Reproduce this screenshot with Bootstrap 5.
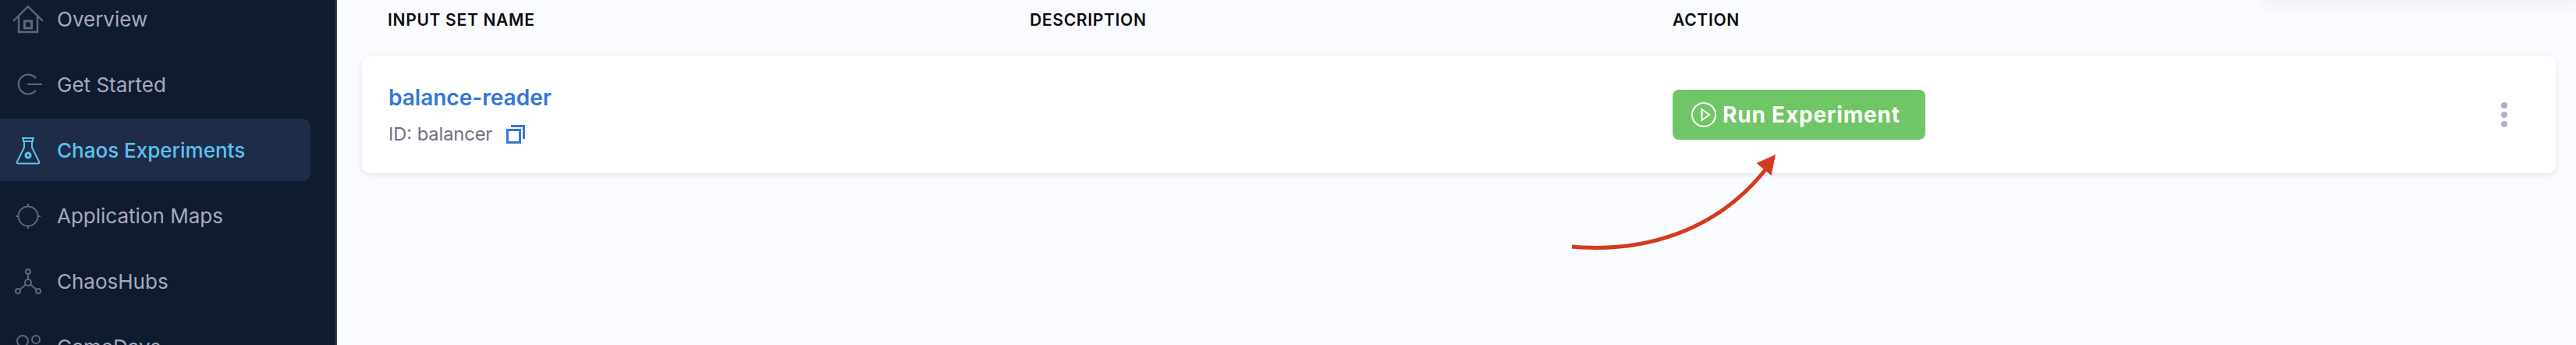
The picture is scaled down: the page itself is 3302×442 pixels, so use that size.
<!DOCTYPE html>
<html lang="en">
<head>
  <meta charset="UTF-8">
  <title>Chaos Experiments - Input Sets</title>
  <link href="https://cdn.jsdelivr.net/npm/bootstrap@5.3.3/dist/css/bootstrap.min.css" rel="stylesheet">
  <style>
    html, body { height: 442px; overflow: hidden; }
    body { font-family: Inter, "Liberation Sans", sans-serif; background: #fafbff; }
    .app-shell { height: 442px; overflow: hidden; position: relative; }

    /* sidebar */
    .side-nav { width: 432px; flex: none; background: #0f1b2e; border-right: 2px solid #3a4150; }
    .side-list { margin-top: -16px; padding-right: 32px; }
    .side-item { height: 80px; margin-bottom: 4px; font-size: 26px; color: #a9a9c2; border-radius: 0 10px 10px 0; }
    .side-item.is-active { background: #1e2c47; color: #5dc1f2; font-weight: 500; }
    .side-icon { width: 73px; flex: none; display: flex; justify-content: center; padding-right: 1px; }
    .side-icon svg { width: 40px; height: 40px; fill: none; stroke: #62667a; stroke-width: 2; }
    .is-active .side-icon svg { stroke: #5dc1f2; }

    /* table */
    .main-area { padding: 0 26px 0 32px; min-width: 0; }
    .set-head, .set-row { display: grid; grid-template-columns: 823px 824px 1fr 80px; }
    .set-head { height: 72px; padding: 12px 33px 0; font-size: 21px; letter-spacing: .7px; font-weight: 600; color: #0b0b0d; line-height: 28px; }
    .set-card { height: 150px; padding: 0 33px; border: 0; border-radius: 10px; background: #fff; box-shadow: 0 2px 6px rgba(40, 41, 61, .1); align-items: center; }
    .set-name { font-size: 28px; font-weight: 600; color: #3478d4; line-height: 34px; text-decoration: none; padding-left: 1px; display: block; }
    .set-id { font-size: 23.500px; color: #6b6d85; line-height: 30px; margin-top: 15px; padding-left: 1px; }
    .copy-icon { width: 24px; height: 24px; margin-left: 11px; fill: none; stroke: #3478d4; stroke-width: 3; vertical-align: -4px; }
    .run-btn { height: 64px; width: 324px; padding: 0 0 0 24px; border: 0; border-radius: 8px; background: #70c666; color: #fff; font-size: 28px; font-weight: 700; letter-spacing: .8px; }
    .run-btn svg { width: 32px; height: 32px; fill: none; stroke: #fff; stroke-width: 2; flex: none; }
    .more-dots { gap: 4px; padding-right: 29px; }
    .more-dots i { display: block; width: 8px; height: 8px; border-radius: 50%; background: #b0b0c8; }

    /* overlays */
    .top-shade { position: absolute; top: -40px; right: 0; width: 400px; height: 40px; box-shadow: 0 2px 22px rgba(40, 41, 61, .09); }
    .call-arrow { position: absolute; left: 2000px; top: 190px; width: 290px; height: 140px; }
  </style>
</head>
<body>
<div class="app-shell d-flex">

  <!-- Sidebar -->
  <nav class="side-nav">
    <div class="side-list">
      <div class="side-item d-flex align-items-center">
        <span class="side-icon"><svg viewBox="0 0 40 40"><path d="M1 23 20 4.500 39 23M8 17v20h24V17" stroke-width="2.400"/><rect x="15.500" y="23" width="9" height="9" stroke-width="3"/></svg></span>
        <span>Overview</span>
      </div>
      <div class="side-item d-flex align-items-center">
        <span class="side-icon"><svg viewBox="0 0 40 40"><path d="M30 12.200A12.500 12.500 0 1 0 30 27.800M19 20h19" stroke-width="2.200"/></svg></span>
        <span>Get Started</span>
      </div>
      <div class="side-item is-active d-flex align-items-center">
        <span class="side-icon"><svg viewBox="0 0 40 40"><path d="M12 5h16M14 5v4h12V5M15 9v8L6 35a1.500 1.500 0 0 0 1 2.500h26a1.500 1.500 0 0 0 1-2.500L25 17V9"/><circle cx="20" cy="27" r="3" stroke-width="3"/></svg></span>
        <span>Chaos Experiments</span>
      </div>
      <div class="side-item d-flex align-items-center">
        <span class="side-icon"><svg viewBox="0 0 40 40"><circle cx="20" cy="21" r="12.500"/><path d="M20 5v3.500M20 33.500V37M4 21h3.500M32.500 21H36"/></svg></span>
        <span>Application Maps</span>
      </div>
      <div class="side-item d-flex align-items-center">
        <span class="side-icon"><svg viewBox="0 0 40 40"><circle cx="20" cy="8" r="3"/><circle cx="20" cy="22" r="4"/><circle cx="7" cy="33" r="3"/><circle cx="33" cy="33" r="3"/><path d="M20 11v7M17 24.500 9.500 31M23 24.500 30.500 31"/></svg></span>
        <span>ChaosHubs</span>
      </div>
      <div class="side-item d-flex align-items-center">
        <span class="side-icon"><svg viewBox="0 0 40 40"><circle cx="13" cy="13" r="7"/><circle cx="30" cy="11" r="5"/><path d="M2 36c0-9 5-14 11-14s11 5 11 14M27 19c6 0 10 4 10 11"/></svg></span>
        <span>GameDays</span>
      </div>
    </div>
  </nav>

  <!-- Main -->
  <main class="main-area flex-grow-1">
    <div class="set-head">
      <div>INPUT SET NAME</div>
      <div>DESCRIPTION</div>
      <div>ACTION</div>
      <div></div>
    </div>
    <div class="card set-card set-row">
      <div>
        <a class="set-name" href="#">balance-reader</a>
        <div class="set-id">ID: balancer
          <svg class="copy-icon" viewBox="0 0 24 24"><rect x="1.500" y="6.500" width="16" height="16"/><path d="M6 1.500h16.500V18"/></svg>
        </div>
      </div>
      <div></div>
      <div>
        <button class="run-btn btn d-flex align-items-center" type="button">
          <svg viewBox="0 0 32 32"><circle cx="16" cy="16" r="15"/><path d="M13.500 9 23 16l-9.500 7z"/></svg>
          <span class="ms-2">Run Experiment</span>
        </button>
      </div>
      <div class="more-dots d-flex flex-column align-items-end">
        <i></i><i></i><i></i>
      </div>
    </div>
  </main>

  <!-- Overlays -->
  <div class="top-shade"></div>
  <svg class="call-arrow" viewBox="0 0 290 140">
    <path d="M15 126C105 134 200 108 265 25" fill="none" stroke="#d43a1f" stroke-width="5"/>
    <path d="M276 8 251.500 19 270.500 35z" fill="#d43a1f"/>
  </svg>
</div>
<script src="https://cdn.jsdelivr.net/npm/bootstrap@5.3.3/dist/js/bootstrap.bundle.min.js"></script>
</body>
</html>
